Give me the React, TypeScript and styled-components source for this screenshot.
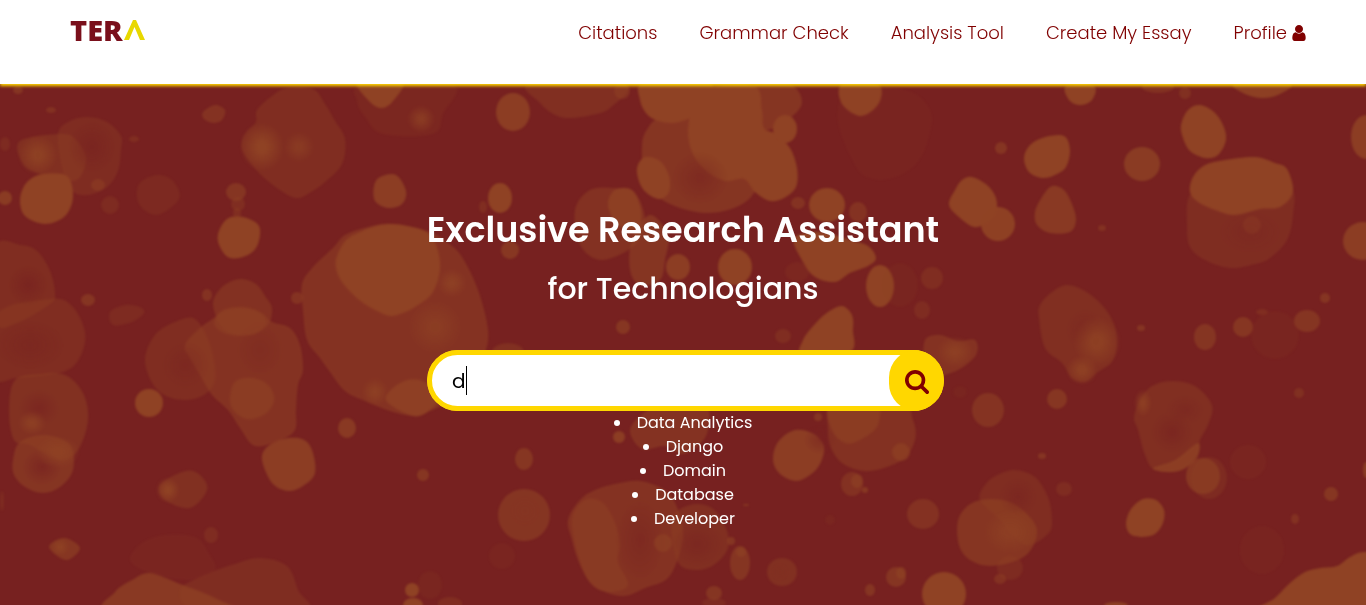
import React, { useState } from 'react';
import styled, { createGlobalStyle } from 'styled-components';

const GlobalStyle = createGlobalStyle`
  * { box-sizing: border-box; }
  html, body, #root { height: 100%; }
  body {
    margin: 0;
    background: #ffffff;
    font-family: Poppins, Inter, "Liberation Sans", sans-serif;
  }
`;

const Page = styled.div`
  display: flex;
  flex-direction: column;
  min-height: 100%;
`;

const Header = styled.header`
  position: relative;
  z-index: 1;
  display: flex;
  justify-content: space-between;
  align-items: flex-start;
  min-height: 84px;
  padding: 16px 60px 0 70px;
  background: #ffffff;
  box-shadow: 0 2px 3px #ffd700;
`;

const Logo = styled.a`
  display: flex;
  align-items: center;
  gap: 1px;
  color: #7a0f1b;
  font-family: "Open Sans", sans-serif;
  font-size: 29px;
  font-weight: 800;
  line-height: 28px;
  text-decoration: none;
`;

const LogoMark = styled.svg`
  width: 21px;
  height: 20px;
`;

const Nav = styled.nav`
  display: flex;
  gap: 42px;
`;

const NavLink = styled.a`
  display: flex;
  align-items: center;
  gap: 5px;
  color: #800000;
  font-size: 18px;
  font-weight: 300;
  line-height: 34px;
  text-decoration: none;
`;

const UserIcon = styled.svg`
  width: 14px;
  height: 16px;
  fill: #800000;
`;

const Hero = styled.main`
  position: relative;
  flex: 1;
  display: flex;
  flex-direction: column;
  align-items: center;
  padding: 119px 20px 40px;
  overflow: hidden;
  background: #772120;
  color: #ffffff;
`;

const Backdrop = styled.svg`
  position: absolute;
  inset: 0;
  width: 100%;
  height: 100%;
`;

const Content = styled.div`
  position: relative;
  display: flex;
  flex-direction: column;
  align-items: center;
  width: 100%;
  max-width: 512px;
`;

const Title = styled.h1`
  margin: 0;
  font-size: 35px;
  font-weight: 600;
  line-height: 54px;
  white-space: nowrap;
`;

const Subtitle = styled.h2`
  margin: 9px 0 0;
  font-size: 30px;
  font-weight: 500;
  line-height: 46px;
  white-space: nowrap;
`;

const SearchForm = styled.form`
  position: relative;
  display: flex;
  align-self: flex-start;
  width: calc(100% + 5px);
  height: 61px;
  margin-top: 38px;
  overflow: hidden;
  border-radius: 31px;
  background: #ffd700;
`;

const SearchInput = styled.input`
  flex: 1;
  min-width: 0;
  margin-right: -30px;
  padding: 0 40px 0 20px;
  border: 5px solid #ffd700;
  border-radius: 31px 0 0 31px;
  outline: none;
  background: #ffffff;
  color: #000000;
  font: 400 20px Poppins, Inter, sans-serif;
`;

const Caret = styled.span`
  position: absolute;
  top: 16px;
  left: 39px;
  width: 1px;
  height: 29px;
  background: #000000;
`;

const SearchButton = styled.button`
  position: relative;
  display: flex;
  align-items: center;
  justify-content: center;
  width: 55px;
  padding: 2px 0 0;
  border: 0;
  border-radius: 30px;
  background: #ffd700;
  cursor: pointer;
`;

const SearchIcon = styled.svg`
  width: 24px;
  height: 24px;
  fill: #800000;
`;

const Suggestions = styled.ul`
  margin: 0;
  padding: 0;
  list-style-position: inside;
  text-align: center;
  font-size: 16px;
  font-weight: 400;
  line-height: 24px;
`;

type Blob = [opacity: number, points: number[]];
type Dot = [x: number, y: number, rx: number, ry: number, opacity: number];

const blobs: Blob[] = [
  [0.35, [88, 117, 107, 122, 121, 136, 121, 150, 118, 171, 107, 187, 88, 195, 72, 191, 63, 171, 58, 134, 70, 121]],
  [0.45, [20, 141, 63, 134, 78, 142, 86, 159, 80, 177, 67, 181, 40, 174, 23, 164]],
  [1, [43, 174, 67, 176, 73, 197, 65, 216, 45, 224, 25, 216, 20, 199, 27, 182]],
  [0.55, [203, 112, 215, 105, 225, 110, 222, 120, 213, 123, 204, 119]],
  [0.4, [272, 96, 287, 88, 313, 89, 325, 104, 335, 121, 345, 139, 342, 164, 325, 182, 311, 192, 298, 198, 283, 192, 260, 174, 243, 152, 242, 140, 247, 131, 256, 122, 257, 110]],
  [0.25, [157, 175, 173, 181, 179, 199, 157, 215, 139, 204, 139, 184]],
  [1, [218, 234, 227, 219, 243, 217, 259, 226, 258, 244, 248, 255, 230, 258, 220, 247]],
  [0.85, [380, 177, 396, 175, 406, 191, 402, 204, 388, 208, 375, 201, 374, 186]],
  [0.18, [357, 101, 363, 84, 453, 84, 443, 114, 433, 134, 383, 134, 365, 117]],
  [1, [358, 82, 402, 82, 393, 101, 382, 108, 370, 102]],
  [0.4, [-4, 247, 20, 245, 37, 251, 50, 271, 55, 294, 50, 304, 17, 323, -4, 321]],
  [0.36, [-4, 315, 50, 299, 72, 306, 85, 332, 80, 357, 63, 372, 17, 378, -4, 377]],
  [0.3, [110, 312, 125, 305, 140, 307, 144, 313, 132, 322, 113, 325]],
  [0.55, [302, 284, 313, 267, 333, 248, 345, 235, 368, 227, 392, 224, 430, 232, 448, 243, 462, 257, 478, 290, 488, 330, 484, 355, 468, 380, 450, 400, 430, 411, 414, 416, 390, 411, 365, 401, 345, 391, 330, 372, 320, 358, 307, 340, 303, 310]],
  [1, [337, 256, 346, 240, 360, 232, 376, 226, 392, 224, 408, 226, 425, 231, 435, 242, 440, 262, 438, 280, 430, 296, 415, 307, 403, 313, 390, 316, 375, 310, 358, 299, 342, 282, 336, 268]],
  [0.85, [386, 400, 400, 383, 420, 380, 440, 395, 430, 410, 413, 416]],
  [0.5, [240, 279, 256, 284, 265, 296, 272, 308, 268, 325, 250, 335, 225, 330, 213, 305, 222, 287]],
  [0.55, [185, 345, 200, 328, 214, 318, 225, 309, 245, 307, 262, 313, 272, 322, 290, 328, 300, 345, 303, 370, 298, 385, 296, 410, 295, 430, 280, 440, 255, 446, 240, 428, 228, 410, 212, 395, 200, 375, 190, 358]],
  [0.4, [145, 360, 155, 335, 175, 322, 195, 319, 210, 345, 215, 380, 200, 397, 175, 399, 155, 387]],
  [0.7, [230, 400, 235, 382, 252, 378, 268, 385, 274, 400, 265, 414, 248, 419, 235, 412]],
  [0.85, [262, 460, 267, 447, 283, 439, 302, 439, 312, 450, 315, 473, 303, 486, 288, 491, 272, 483]],
  [0.45, [160, 485, 185, 471, 200, 475, 207, 490, 190, 508, 165, 500]],
  [0.65, [49, 547, 64, 538, 80, 548, 66, 560]],
  [0.48, [15, 380, 40, 374, 65, 375, 83, 393, 88, 420, 78, 450, 60, 460, 30, 445, 14, 440, 9, 410]],
  [0.6, [13, 460, 20, 442, 45, 435, 70, 445, 73, 470, 60, 487, 43, 493, 25, 487, 14, 475]],
  [0.75, [110, 612, 115, 592, 132, 580, 150, 573, 180, 584, 215, 598, 240, 616]],
  [0.38, [180, 590, 210, 573, 235, 564, 260, 558, 287, 566, 298, 590, 305, 612, 200, 612]],
  [0.13, [130, 560, 142, 543, 165, 535, 195, 537, 208, 552, 215, 570, 190, 580, 150, 573]],
  [0.42, [530, 84, 625, 84, 610, 108, 592, 115, 570, 118, 555, 115, 540, 103]],
  [0.6, [755, 84, 790, 84, 802, 102, 790, 118, 765, 130, 750, 110]],
  [0.6, [642, 145, 648, 128, 660, 118, 700, 110, 770, 160, 760, 182, 748, 200, 728, 210, 705, 213, 680, 208, 660, 198, 645, 180]],
  [1, [640, 100, 645, 82, 710, 82, 702, 105, 690, 118, 670, 123, 650, 117]],
  [1, [694, 102, 708, 94, 715, 86, 755, 86, 762, 110, 764, 128, 776, 134, 790, 148, 797, 168, 796, 187, 784, 198, 770, 201, 755, 192, 744, 179, 725, 181, 705, 170, 692, 152, 688, 130]],
  [1, [637, 168, 645, 157, 660, 161, 669, 176, 669, 192, 660, 199, 648, 194, 640, 184]],
  [1, [842, 84, 878, 84, 879, 103, 861, 116, 842, 104]],
  [0.1, [838, 120, 850, 90, 905, 90, 930, 110, 928, 140, 915, 165, 892, 178, 870, 178, 855, 165]],
  [0.5, [575, 210, 590, 190, 615, 188, 635, 193, 645, 220, 635, 245, 602, 260, 580, 245]],
  [0.85, [608, 205, 615, 190, 632, 190, 641, 210, 638, 228, 618, 225]],
  [0.6, [632, 240, 650, 215, 668, 235, 665, 260, 660, 280, 640, 285, 630, 270]],
  [1, [794, 238, 820, 232, 850, 240, 868, 246, 876, 258, 868, 266, 850, 273, 835, 282, 815, 277, 803, 262]],
  [1, [803, 340, 815, 324, 828, 312, 842, 306, 852, 315, 853, 330, 850, 352, 803, 355]],
  [0.55, [925, 340, 940, 335, 958, 341, 975, 340, 976, 355, 958, 370, 935, 376, 925, 365]],
  [0.55, [630, 430, 645, 412, 665, 405, 705, 405, 708, 430, 698, 446, 682, 454, 665, 446, 642, 449]],
  [0.85, [773, 460, 778, 442, 795, 430, 814, 434, 824, 447, 820, 464, 810, 475, 796, 481, 780, 474]],
  [0.5, [828, 430, 835, 400, 900, 400, 913, 420, 915, 440, 902, 460, 870, 471, 845, 465, 832, 450]],
  [0.7, [830, 405, 875, 400, 878, 425, 860, 440, 845, 443, 832, 430]],
  [0.55, [568, 520, 580, 500, 595, 490, 615, 484, 640, 481, 665, 490, 676, 505, 683, 530, 680, 552, 668, 578, 645, 588, 625, 596, 605, 592, 590, 582, 578, 560, 572, 540]],
  [0.5, [572, 520, 585, 500, 603, 503, 616, 525, 620, 545, 618, 562, 628, 585, 610, 592, 592, 585, 580, 562]],
  [0.42, [672, 520, 690, 505, 712, 508, 726, 528, 728, 548, 715, 564, 697, 570, 678, 562]],
  [1, [1066, 86, 1094, 86, 1092, 100, 1080, 105, 1069, 100]],
  [1, [1024, 158, 1030, 145, 1045, 137, 1064, 136, 1070, 150, 1066, 167, 1055, 175, 1042, 178, 1029, 172]],
  [1, [1181, 125, 1188, 110, 1200, 105, 1214, 112, 1223, 125, 1226, 140, 1218, 155, 1205, 158, 1190, 151, 1183, 138]],
  [0.9, [1235, 84, 1290, 84, 1278, 95, 1262, 98, 1245, 94]],
  [1, [949, 205, 955, 190, 962, 180, 972, 177, 987, 185, 996, 198, 996, 213, 987, 223, 974, 227, 960, 218]],
  [0.75, [1035, 212, 1042, 197, 1052, 186, 1064, 190, 1072, 204, 1076, 220, 1070, 232, 1050, 233, 1037, 225]],
  [0.38, [1190, 195, 1215, 190, 1265, 190, 1292, 190, 1293, 215, 1287, 240, 1270, 258, 1255, 264, 1230, 268, 1205, 260, 1190, 247, 1187, 225]],
  [1, [1190, 192, 1193, 177, 1205, 165, 1225, 160, 1255, 157, 1275, 163, 1287, 169, 1293, 192, 1280, 207, 1260, 209, 1235, 215, 1215, 210, 1198, 202]],
  [0.42, [1039, 318, 1040, 305, 1052, 292, 1067, 285, 1085, 291, 1102, 305, 1114, 324, 1117, 345, 1112, 362, 1098, 372, 1085, 382, 1072, 378, 1062, 363, 1045, 348]],
  [0.42, [1134, 418, 1140, 400, 1152, 386, 1172, 381, 1195, 386, 1212, 405, 1208, 425, 1200, 440, 1197, 455, 1180, 470, 1155, 470, 1145, 455, 1138, 430]],
  [0.8, [1153, 468, 1175, 460, 1198, 443, 1197, 458, 1182, 470, 1165, 472]],
  [1, [1126, 523, 1131, 509, 1143, 499, 1156, 500, 1164, 510, 1163, 523, 1155, 534, 1142, 537, 1130, 534]],
  [0.36, [980, 500, 985, 485, 997, 475, 1015, 470, 1035, 477, 1048, 497, 1052, 520, 1048, 534, 1025, 545, 1000, 520]],
  [0.62, [957, 530, 960, 515, 972, 503, 990, 499, 1010, 502, 1028, 515, 1037, 530, 1032, 548, 1018, 560, 990, 566, 970, 560, 960, 548]],
  [1, [1250, 620, 1275, 598, 1290, 583, 1305, 572, 1320, 568, 1337, 566, 1350, 557, 1366, 552, 1400, 560, 1400, 620]],
];

const dots: Dot[] = [
  [18, 90, 5, 4, 0.6], [51, 110, 5, 3, 0.5], [5, 144, 5, 7, 0.3], [134, 139, 5, 3, 0.4],
  [98, 185, 7, 6, 0.5], [110, 205, 9, 9, 0.3], [5, 198, 7, 7, 0.8],
  [236, 192, 10, 9, 0.6], [238, 204, 7, 7, 0.4], [237, 213, 4, 5, 0.4],
  [88, 300, 7, 6, 0.6], [207, 295, 5, 6, 0.55], [297, 298, 6, 6, 0.55], [240, 322, 26, 14, 0.5],
  [149, 403, 14, 14, 1], [347, 428, 9, 10, 0.75], [423, 475, 6, 6, 0.65], [211, 535, 7, 8, 0.35],
  [412, 590, 7, 7, 1], [413, 605, 10, 7, 1], [430, 585, 12, 14, 0.15], [450, 604, 12, 7, 0.4],
  [513, 112, 17, 19, 0.85], [622, 91, 8, 8, 0.5], [785, 129, 12, 14, 1],
  [500, 198, 12, 15, 1], [483, 207, 4, 6, 0.4], [510, 250, 9, 9, 0.7], [678, 267, 12, 13, 0.85],
  [735, 267, 17, 18, 1], [827, 205, 18, 17, 1], [798, 203, 7, 6, 0.55], [858, 212, 9, 10, 0.55],
  [797, 272, 12, 10, 0.2], [880, 286, 14, 21, 1], [900, 285, 18, 22, 0.12], [623, 327, 7, 7, 0.65],
  [932, 278, 11, 11, 0.4], [922, 310, 8, 9, 0.35], [783, 336, 8, 7, 0.4], [508, 352, 16, 9, 0.45],
  [524, 459, 9, 11, 0.65], [619, 437, 6, 6, 0.85], [901, 452, 9, 9, 0.7], [852, 484, 11, 12, 0.5],
  [857, 481, 6, 7, 0.6], [865, 490, 3, 3, 0.7], [818, 417, 4, 4, 0.6], [524, 515, 26, 26, 0.6],
  [502, 556, 13, 13, 0.14], [740, 563, 10, 17, 0.6], [741, 552, 5, 5, 0.6], [731, 541, 4, 4, 0.6],
  [782, 572, 15, 14, 0.45], [714, 603, 12, 5, 0.3], [714, 593, 8, 7, 0.6], [896, 577, 10, 10, 0.6],
  [901, 573, 5, 6, 0.7], [870, 590, 5, 6, 0.6], [663, 543, 9, 9, 0.6], [746, 505, 3, 1, 0.7], [830, 520, 5, 5, 0.15],
  [1001, 148, 6, 6, 0.6], [1142, 164, 18, 17, 0.8], [1158, 87, 16, 6, 0.5], [1185, 93, 6, 6, 0.45],
  [1366, 137, 15, 22, 0.85], [998, 224, 17, 17, 0.95], [1102, 228, 4, 3, 0.5], [1252, 225, 9, 9, 0.35],
  [1363, 241, 20, 19, 0.85], [1141, 328, 4, 3, 0.6], [1205, 337, 11, 13, 0.6], [1243, 327, 10, 10, 0.65],
  [1307, 321, 13, 11, 0.6], [1325, 298, 5, 5, 0.6], [1262, 312, 6, 3, 0.4], [1275, 335, 24, 24, 0.12],
  [988, 410, 16, 17, 0.58], [1057, 399, 10, 10, 0.65], [1299, 393, 5, 5, 0.45], [1042, 456, 4, 3, 0.6],
  [1203, 476, 17, 18, 0.7], [1209, 478, 18, 21, 0.3], [1248, 462, 18, 17, 0.13], [1331, 494, 7, 7, 0.65],
  [1295, 519, 4, 5, 0.5], [1064, 489, 8, 7, 0.35], [923, 514, 16, 15, 0.52], [1010, 568, 13, 12, 0.3],
  [1000, 579, 6, 5, 0.5], [944, 594, 22, 22, 1], [1262, 550, 22, 24, 0.1], [1116, 605, 12, 3, 0.9],
  [960, 392, 7, 6, 0.12], [1366, 470, 3, 8, 0.8], [2, 501, 2, 10, 0.3],
];

const glows: Dot[] = [
  [38, 155, 20, 20, 0.9], [262, 147, 22, 24, 1], [299, 147, 15, 15, 0.6], [421, 119, 14, 14, 0.7],
  [452, 283, 14, 14, 0.8], [435, 327, 26, 26, 0.6], [375, 392, 13, 14, 0.8], [32, 423, 14, 12, 0.8],
  [168, 490, 12, 13, 1], [60, 547, 9, 9, 0.9], [58, 452, 22, 16, 0.8], [1097, 342, 24, 26, 0.9],
  [1082, 370, 16, 15, 0.9], [1143, 403, 9, 14, 0.8], [1010, 532, 26, 22, 0.7], [955, 352, 18, 16, 0.8],
];

const shades: Dot[] = [
  [92, 147, 24, 26, 0.6], [28, 285, 20, 20, 0.7], [30, 345, 34, 24, 0.4], [39, 408, 20, 18, 0.6],
  [42, 467, 20, 18, 0.7], [185, 365, 24, 24, 0.4], [260, 350, 26, 30, 0.3], [525, 511, 16, 16, 0.4],
  [640, 540, 26, 44, 0.5], [697, 544, 26, 22, 0.5], [700, 178, 28, 26, 0.5], [1018, 497, 18, 18, 0.5],
  [1172, 432, 20, 20, 0.6], [1185, 410, 18, 14, 0.4], [1085, 330, 18, 20, 0.4], [820, 440, 16, 14, 0.5],
  [1250, 232, 32, 22, 0.3], [780, 572, 9, 9, 0.4],
];

/** Closed curve through every point, each corner rounded by its neighbours. */
function closedCurve(p: number[]): string {
  const n = p.length / 2;
  const at = (i: number) => {
    const k = ((i % n) + n) % n;
    return [p[k * 2], p[k * 2 + 1]];
  };
  let d = `M${p[0]} ${p[1]}`;
  for (let i = 0; i < n; i++) {
    const [a, b, c, e] = [at(i - 1), at(i), at(i + 1), at(i + 2)];
    d += `C${b[0] + (c[0] - a[0]) / 6} ${b[1] + (c[1] - a[1]) / 6} ${c[0] - (e[0] - b[0]) / 6} ${c[1] - (e[1] - b[1]) / 6} ${c[0]} ${c[1]}`;
  }
  return d + 'Z';
}

const ellipses = (list: Dot[], fill: string) =>
  list.map(([x, y, rx, ry, o], i) => (
    <ellipse key={i} cx={x} cy={y} rx={rx} ry={ry} fill={fill} opacity={o} />
  ));

function Bokeh() {
  return (
    <Backdrop viewBox="0 84 1366 521" preserveAspectRatio="xMidYMin slice" aria-hidden="true">
      <defs>
        <filter id="soften" x="-2%" y="-2%" width="104%" height="104%" colorInterpolationFilters="sRGB">
          <feGaussianBlur stdDeviation="1" />
        </filter>
        <radialGradient id="glow">
          <stop offset="0.2" stopColor="#8f4224" />
          <stop offset="1" stopColor="#8f4224" stopOpacity="0" />
        </radialGradient>
        <radialGradient id="shade">
          <stop offset="0" stopColor="#772120" />
          <stop offset="1" stopColor="#772120" stopOpacity="0" />
        </radialGradient>
      </defs>
      <g filter="url(#soften)">
        {blobs.map(([o, points], i) => (
          <path key={i} d={closedCurve(points)} fill="#8f4224" opacity={o} />
        ))}
        {ellipses(shades, 'url(#shade)')}
        {ellipses(dots, '#8f4224')}
        {ellipses(glows, 'url(#glow)')}
      </g>
    </Backdrop>
  );
}

const links = ['Citations', 'Grammar Check', 'Analysis Tool', 'Create My Essay'];
const suggestions = ['Data Analytics', 'Django', 'Domain', 'Database', 'Developer'];

export default function App() {
  const [query, setQuery] = useState('d');
  return (
    <Page>
      <GlobalStyle />
      <Header>
        <Logo href="#" aria-label="TERA">
          TER
          <LogoMark viewBox="0 0 21 20" aria-hidden="true">
            <path d="M0 20 9 0h3l9 20h-5L10.500 7 5 20z" fill="#e8d800" />
          </LogoMark>
        </Logo>
        <Nav>
          {links.map((label) => (
            <NavLink key={label} href="#">{label}</NavLink>
          ))}
          <NavLink href="#">
            Profile
            <UserIcon viewBox="256 128 1280 1536" aria-hidden="true">
              <path d="M1536 1399q0 109-62.5 187t-150.5 78h-854q-88 0-150.5-78t-62.5-187q0-85 8.5-160.5t31.5-152 58.5-131 94-89 134.5-34.5q131 128 313 128t313-128q76 0 134.5 34.5t94 89 58.5 131 31.5 152 8.5 160.5zm-256-887q0 159-112.5 271.500t-271.500 112.500-271.500-112.500-112.500-271.500 112.500-271.500 271.500-112.500 271.500 112.500 112.500 271.500z" />
            </UserIcon>
          </NavLink>
        </Nav>
      </Header>
      <Hero>
        <Bokeh />
        <Content>
          <Title>Exclusive Research Assistant</Title>
          <Subtitle>for Technologians</Subtitle>
          <SearchForm role="search" onSubmit={(e) => e.preventDefault()}>
            <SearchInput
              type="text"
              aria-label="Search"
              value={query}
              onChange={(e) => setQuery(e.target.value)}
            />
            {query === 'd' && <Caret />}
            <SearchButton type="submit" aria-label="Submit search">
              <SearchIcon viewBox="64 128 1664 1664" aria-hidden="true">
                <path d="M1216 832q0-185-131.5-316.5t-316.5-131.5-316.5 131.5-131.5 316.5 131.5 316.5 316.5 131.5 316.5-131.5 131.5-316.5zm512 832q0 52-38 90t-90 38q-54 0-90-38l-343-342q-179 124-399 124-143 0-273.5-55.5t-225-150-150-225-55.5-273.5 55.5-273.5 150-225 225-150 273.5-55.5 273.5 55.5 225 150 150 225 55.5 273.5q0 220-124 399l343 343q37 37 37 90z" />
              </SearchIcon>
            </SearchButton>
          </SearchForm>
          <Suggestions>
            {suggestions.map((item) => (
              <li key={item}>{item}</li>
            ))}
          </Suggestions>
        </Content>
      </Hero>
    </Page>
  );
}
